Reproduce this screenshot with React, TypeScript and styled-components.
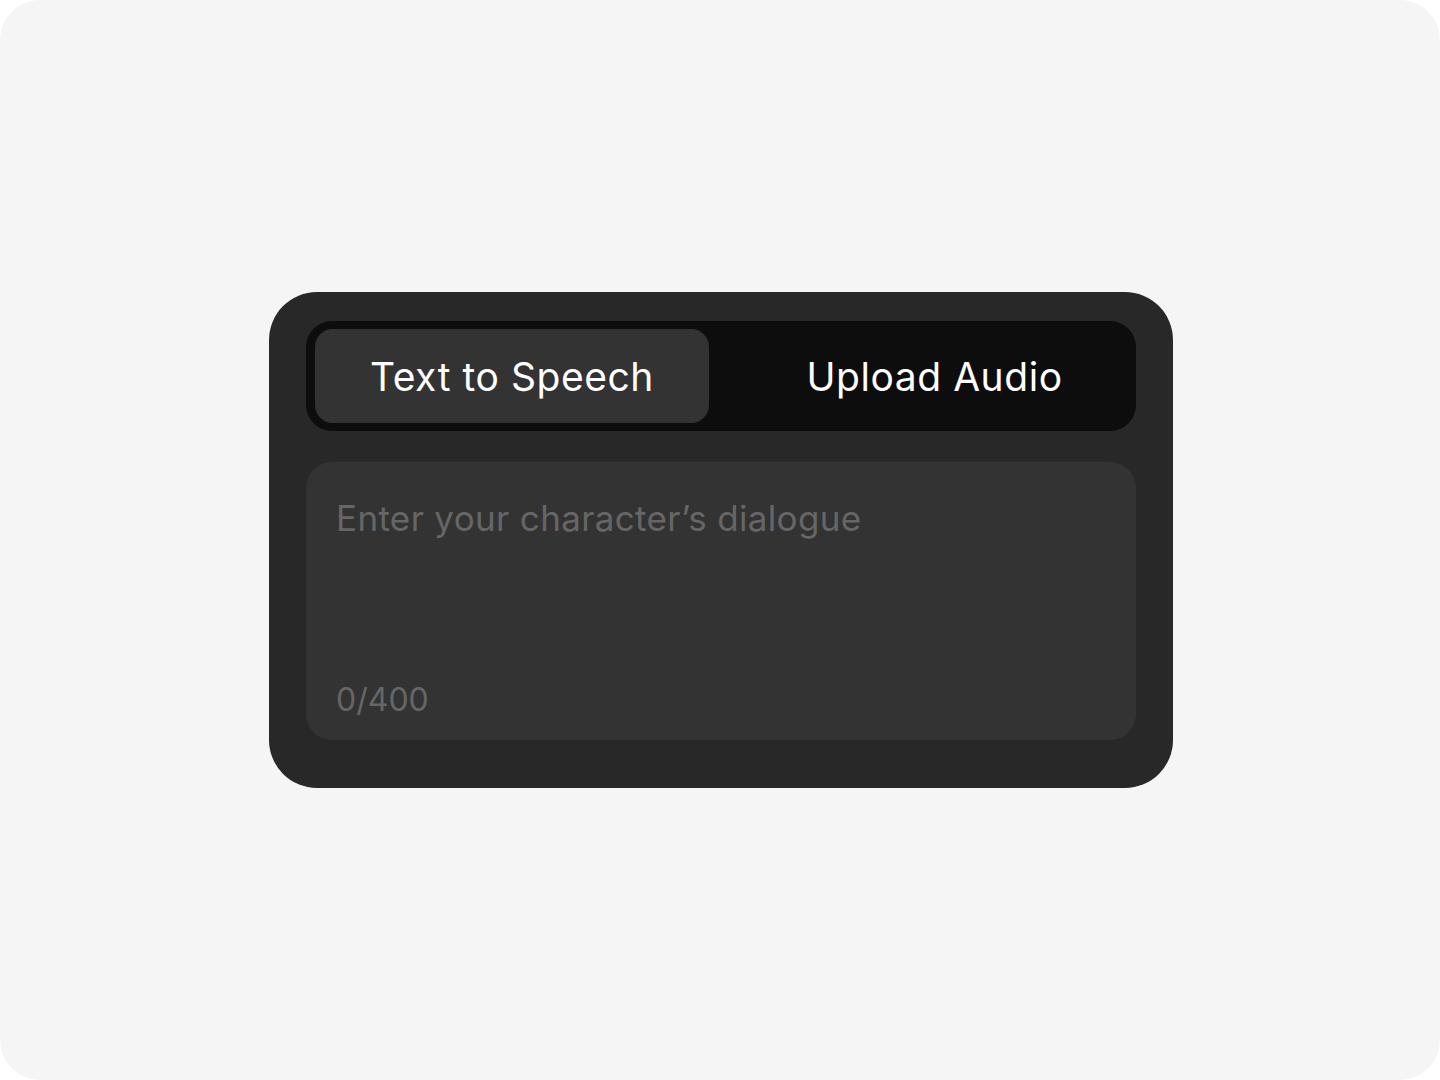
import React, { useState } from "react";
import styled, { createGlobalStyle } from "styled-components";

const GlobalStyle = createGlobalStyle`
  html, body {
    margin: 0;
    padding: 0;
    background: #ffffff;
  }
  body {
    font-family: Inter, "Noto Sans", sans-serif;
  }
`;

const Page = styled.div`
  width: 1440px;
  height: 1080px;
  box-sizing: border-box;
  padding-left: 2px;
  background: #f5f5f5;
  border-radius: 40px;
  display: flex;
  align-items: center;
  justify-content: center;
`;

const Card = styled.div`
  width: 904px;
  box-sizing: border-box;
  padding: 29px 37px 48px;
  background: #282828;
  border-radius: 48px;
  display: flex;
  flex-direction: column;
  gap: 31px;
`;

const TabBar = styled.div`
  height: 110px;
  box-sizing: border-box;
  padding: 8px 9px;
  background: #0d0d0d;
  border-radius: 26px;
  display: flex;
`;

const Tab = styled.button<{ $active: boolean }>`
  flex: ${(p) => (p.$active ? "0 0 394px" : "1")};
  padding: ${(p) => (p.$active ? "0" : "0 0 0 33px")};
  border: none;
  border-radius: 18px;
  background: ${(p) => (p.$active ? "#333333" : "transparent")};
  color: #ffffff;
  font-family: Inter, sans-serif;
  font-size: 39px;
  font-weight: 400;
  letter-spacing: 0.55px;
  cursor: pointer;
`;

const TextBox = styled.div`
  height: 278px;
  box-sizing: border-box;
  padding: 30px 30px 20px;
  background: #333333;
  border-radius: 26px;
  display: flex;
  flex-direction: column;
  justify-content: space-between;
`;

const Dialogue = styled.textarea`
  flex: 1;
  border: none;
  outline: none;
  resize: none;
  padding: 0;
  background: transparent;
  color: #ffffff;
  font-family: Inter, sans-serif;
  font-size: 35px;
  letter-spacing: 0.35px;
  line-height: 52px;

  &::placeholder {
    color: #666666;
  }
`;

const Counter = styled.span`
  color: #666666;
  font-family: Inter, sans-serif;
  font-size: 32px;
  line-height: 40px;
`;

export default function App() {
  const [tab, setTab] = useState<"tts" | "upload">("tts");
  const [text, setText] = useState("");

  return (
    <>
      <GlobalStyle />
      <Page>
        <Card>
          <TabBar>
            <Tab $active={tab === "tts"} onClick={() => setTab("tts")}>
              Text to Speech
            </Tab>
            <Tab $active={tab === "upload"} onClick={() => setTab("upload")}>
              Upload Audio
            </Tab>
          </TabBar>
          <TextBox>
            <Dialogue
              value={text}
              maxLength={400}
              placeholder="Enter your character’s dialogue"
              onChange={(e) => setText(e.target.value)}
            />
            <Counter>{text.length}/400</Counter>
          </TextBox>
        </Card>
      </Page>
    </>
  );
}
